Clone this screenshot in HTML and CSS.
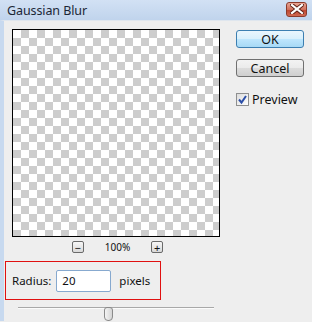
FILE: index.html
```html
<!DOCTYPE html>
<html lang="en">
<head>
  <meta charset="UTF-8">
  <meta name="viewport" content="width=device-width, initial-scale=1.0">
  <title>Gaussian Blur</title>
  <link rel="stylesheet" href="styles.css">
</head>
<body>
  <div class="window">
    <div class="titlebar">
      <span class="title">Gaussian Blur</span>
      <span class="close">
        <svg width="14" height="10" viewBox="0 0 14 10">
          <path d="M2 1 L12 9 M12 1 L2 9" stroke="#5a1f14" stroke-width="4" stroke-linecap="square"/>
          <path d="M2 1 L12 9 M12 1 L2 9" stroke="#fff" stroke-width="2.2" stroke-linecap="square"/>
        </svg>
      </span>
    </div>
    <div class="content">
      <div class="left">
        <div class="preview"></div>
        <div class="zoom-row">
          <span class="zoom-btn">−</span>
          <span class="zoom-value">100%</span>
          <span class="zoom-btn">+</span>
        </div>
        <div class="radius-group">
          <label class="label">Radius:</label>
          <input class="radius-input" type="text" value="20">
          <span class="label">pixels</span>
        </div>
        <div class="slider">
          <div class="track"></div>
          <div class="thumb"></div>
        </div>
      </div>
      <div class="right">
        <button class="btn btn-default">OK</button>
        <button class="btn">Cancel</button>
        <label class="check">
          <span class="box">
            <svg width="11" height="11" viewBox="0 0 11 11">
              <path d="M2 5.5 L4.5 8.5 L9 2" fill="none" stroke="#2c4fa8" stroke-width="2"/>
            </svg>
          </span>
          Preview
        </label>
      </div>
    </div>
  </div>
</body>
</html>
```

FILE: styles.css
```css
body {
  margin: 0;
  font-family: "Noto Sans", Arial, sans-serif;
  background: #eeeeee;
}
.window {
  width: 312px;
  height: 322px;
  background: #eeeeee;
  overflow: hidden;
}
.titlebar {
  height: 21px;
  display: flex;
  align-items: center;
  justify-content: space-between;
  padding: 0 5px 0 7px;
  background: linear-gradient(#d2e1f4, #bfd3ec);
  box-sizing: border-box;
}
.title {
  font-size: 12.5px;
  color: #1b2635;
  letter-spacing: -0.1px;
}
.close {
  width: 21px;
  height: 15px;
  margin-bottom: 3px;
  border: 1px solid #8b3b2c;
  border-radius: 3px;
  background: linear-gradient(#e9a695, #d0705c 50%, #bd4630 55%, #d06a52);
  display: flex;
  align-items: center;
  justify-content: center;
  box-sizing: border-box;
}
.content {
  display: flex;
  gap: 16px;
  padding: 8px 0 0 1px;
  border-left: 4px solid #c7d9ef;
  border-top: 1px solid #dfe6ee;
  height: 301px;
  box-sizing: border-box;
  margin-top: -1px;
}
.left {
  width: 215px;
}
.preview {
  width: 208px;
  height: 208px;
  margin-left: 7px;
  box-sizing: border-box;
  border: 1px solid #000;
  background-color: #fff;
  background-image:
    linear-gradient(45deg, #cdcdcd 25%, transparent 25%, transparent 75%, #cdcdcd 75%),
    linear-gradient(45deg, #cdcdcd 25%, transparent 25%, transparent 75%, #cdcdcd 75%);
  background-size: 16px 16px;
  background-position: 0 0, 8px 8px;
}
.zoom-row {
  display: flex;
  justify-content: center;
  align-items: center;
  gap: 21px;
  margin: 3px 0 0 10px;
  height: 13px;
}
.zoom-btn {
  width: 12px;
  height: 12px;
  border: 1px solid #6a6a6a;
  border-radius: 2px;
  background: linear-gradient(#f6f6f6, #d9d9d9);
  font-size: 11px;
  line-height: 11px;
  text-align: center;
  color: #111;
  box-sizing: border-box;
}
.zoom-value {
  font-size: 10px;
  color: #111;
}
.radius-group {
  display: flex;
  align-items: center;
  width: 156px;
  height: 39px;
  margin-top: 8px;
  padding-left: 6px;
  box-sizing: border-box;
  border: 1px solid #e01010;
}
.label {
  font-size: 11.5px;
  color: #111;
}
.radius-input {
  width: 55px;
  height: 22px;
  margin: 0 8px 0 5px;
  padding: 0 5px;
  box-sizing: border-box;
  border: 1px solid #87a9cf;
  border-radius: 2px;
  font-family: "Noto Sans", Arial, sans-serif;
  font-size: 11.5px;
  color: #111;
  background: #fff;
}
.slider {
  position: relative;
  margin: 1px 0 0 13px;
  width: 196px;
  height: 15px;
}
.track {
  margin-top: 7px;
  height: 1px;
  background: #a8a8a8;
  border-bottom: 1px solid #fbfbfb;
}
.thumb {
  position: absolute;
  left: 86px;
  top: 0;
  width: 9px;
  height: 14px;
  border: 1px solid #8a8a8a;
  border-radius: 3px 3px 4px 4px;
  background: linear-gradient(90deg, #f4f4f4, #d4d4d4);
  box-sizing: border-box;
}
.right {
  display: flex;
  flex-direction: column;
  align-items: flex-start;
  padding-top: 1px;
}
.btn {
  width: 68px;
  height: 18px;
  padding: 0;
  border: 1px solid #707070;
  border-radius: 3px;
  background: linear-gradient(#f3f3f3, #ebebeb 48%, #dcdcdc 52%, #cfcfcf);
  font-family: "Noto Sans", Arial, sans-serif;
  font-size: 12.5px;
  line-height: 15px;
  color: #111;
}
.btn-default {
  border-color: #3c7fb1;
  background: linear-gradient(#eaf6fd, #d9f0fc 48%, #bee6fd 52%, #a7d9f5);
  margin-bottom: 11px;
}
.check {
  display: flex;
  align-items: center;
  gap: 3px;
  margin-top: 14px;
  font-size: 12.5px;
  color: #111;
}
.box {
  width: 13px;
  height: 13px;
  border: 1px solid #8e8f8f;
  background: linear-gradient(135deg, #dcdcdc, #fff);
  box-sizing: border-box;
  display: flex;
  align-items: center;
  justify-content: center;
}
```
